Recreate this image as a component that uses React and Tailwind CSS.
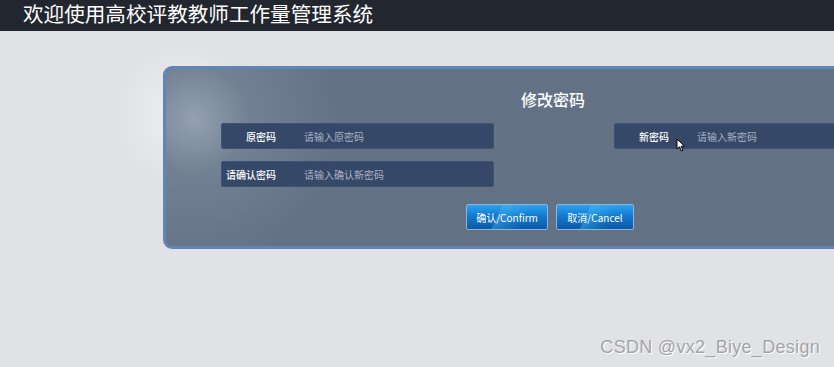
import React from "react";

function Field({ label, placeholder }) {
  return (
    <div className="flex items-center h-[26px] w-[273px] bg-[#364867] rounded-[2px] border border-[#3f5273]">
      <div className="w-[54px] text-right text-[10px] font-medium text-white">{label}</div>
      <div className="ml-[28px] text-[10px] text-[#a8b2c2]">{placeholder}</div>
    </div>
  );
}

function Cursor() {
  return (
    <svg className="absolute left-[676px] top-[138px]" width="10" height="14" viewBox="0 0 10 14">
      <path d="M1 1 L1 11 L3.5 8.8 L5.5 13 L7 12.3 L5.1 8.2 L8.5 8.2 Z" fill="#fff" stroke="#000" strokeWidth="1" />
    </svg>
  );
}

const btnBg =
  "linear-gradient(115deg, rgba(255,255,255,0) 38%, rgba(80,200,255,0.35) 40%, rgba(80,200,255,0) 70%), linear-gradient(180deg, #2aa3f0 0%, #1479d0 45%, #0b5aa6 100%)";

export default function App() {
  return (
    <div
      className="relative w-[834px] h-[367px] overflow-hidden bg-[#e1e2e6]"
      style={{
        fontFamily: '"Noto Sans CJK SC", "Liberation Sans", sans-serif',
        backgroundImage: "radial-gradient(circle at 185px 115px, rgba(238,239,242,1) 0px, rgba(225,226,230,0) 70px)",
      }}
    >
      <div className="h-[31px] bg-[#22262e] flex items-start pl-[23px]">
        <h1 className="text-[20.6px] leading-[27px] text-white whitespace-nowrap">欢迎使用高校评教教师工作量管理系统</h1>
      </div>

      <div className="pt-[35px] pl-[163px]">
        <div
          className="w-[780px] h-[183px] rounded-[9px] border-[3px] border-[#6285b6] bg-[#627184] pt-[17px]"
          style={{
            backgroundImage:
              "radial-gradient(circle at 28px 50px, rgba(190,200,214,0.55) 0px, rgba(150,163,180,0.3) 55px, rgba(98,113,132,0) 150px)",
          }}
        >
          <div className="text-center text-[16px] leading-[26px] text-white font-medium">修改密码</div>
          <div className="mt-[11px] px-[55px] flex justify-between">
            <div className="flex flex-col gap-[12px]">
              <Field label="原密码" placeholder="请输入原密码" />
              <Field label="请确认密码" placeholder="请输入确认新密码" />
            </div>
            <div className="mr-[-2px]">
              <Field label="新密码" placeholder="请输入新密码" />
            </div>
          </div>
          <div className="mt-[17px] flex justify-center gap-[8px] pr-[6px]">
            <button
              className="w-[82px] h-[26px] text-[10px] text-white border border-[#8fb3da] rounded-[2px]"
              style={{ backgroundImage: btnBg }}
            >
              确认/Confirm
            </button>
            <button
              className="w-[78px] h-[26px] text-[10px] text-white border border-[#8fb3da] rounded-[2px]"
              style={{ backgroundImage: btnBg }}
            >
              取消/Cancel
            </button>
          </div>
        </div>
      </div>

      <Cursor />

      <div
        className="absolute right-[14px] top-[334px] text-[18px] tracking-[0.3px] text-[#a3a4a8]"
        style={{ fontFamily: '"Liberation Sans", sans-serif', textShadow: "1px 1px 0 #ffffff" }}
      >
        CSDN @vx2_Biye_Design
      </div>
    </div>
  );
}
